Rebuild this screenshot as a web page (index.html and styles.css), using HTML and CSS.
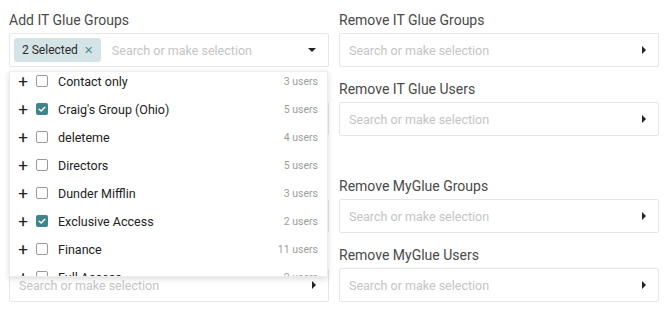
FILE: index.html
```html
<!DOCTYPE html>
<html lang="en">
<head>
    <meta charset="UTF-8">
    <meta name="viewport" content="width=device-width, initial-scale=1.0">
    <title>Group Sync</title>
    <link rel="stylesheet" href="styles.css">
</head>
<body>
    <div class="columns">
        <!-- Add column -->
        <div class="column">
            <div class="field">
                <label class="field-label">Add IT Glue Groups</label>
                <div class="select open">
                    <span class="tag">2 Selected <span class="tag-x">&#x2715;</span></span>
                    <span class="placeholder">Search or make selection</span>
                    <span class="caret-down"></span>
                </div>

                <div class="dropdown">
                    <ul class="options">
                        <li class="option"><span class="plus">+</span><span class="check"></span><span class="name">Contact only</span><span class="count">3 users</span></li>
                        <li class="option"><span class="plus">+</span><span class="check checked"><svg viewBox="0 0 12 12" width="12" height="12"><path d="M3.2 6.2 5.2 8 8.8 4.2" fill="none" stroke="#fff" stroke-width="1.4" stroke-linecap="round" stroke-linejoin="round"/></svg></span><span class="name">Craig's Group (Ohio)</span><span class="count">5 users</span></li>
                        <li class="option"><span class="plus">+</span><span class="check"></span><span class="name">deleteme</span><span class="count">4 users</span></li>
                        <li class="option"><span class="plus">+</span><span class="check"></span><span class="name">Directors</span><span class="count">5 users</span></li>
                        <li class="option"><span class="plus">+</span><span class="check"></span><span class="name">Dunder Mifflin</span><span class="count">3 users</span></li>
                        <li class="option"><span class="plus">+</span><span class="check checked"><svg viewBox="0 0 12 12" width="12" height="12"><path d="M3.2 6.2 5.2 8 8.8 4.2" fill="none" stroke="#fff" stroke-width="1.4" stroke-linecap="round" stroke-linejoin="round"/></svg></span><span class="name">Exclusive Access</span><span class="count">2 users</span></li>
                        <li class="option"><span class="plus">+</span><span class="check"></span><span class="name">Finance</span><span class="count">11 users</span></li>
                        <li class="option"><span class="plus">+</span><span class="check"></span><span class="name">Full Access</span><span class="count">2 users</span></li>
                    </ul>
                </div>
            </div>

            <div class="field">
                <label class="field-label">Add IT Glue Users</label>
                <div class="select">
                    <span class="placeholder">Search or make selection</span>
                    <span class="caret-right"></span>
                </div>
            </div>

            <div class="field section-start">
                <label class="field-label">Add MyGlue Groups</label>
                <div class="select">
                    <span class="placeholder">Search or make selection</span>
                    <span class="caret-right"></span>
                </div>
            </div>

            <div class="field">
                <label class="field-label">Add MyGlue Users</label>
                <div class="select">
                    <span class="placeholder">Search or make selection</span>
                    <span class="caret-right"></span>
                </div>
            </div>
        </div>

        <!-- Remove column -->
        <div class="column">
            <div class="field">
                <label class="field-label">Remove IT Glue Groups</label>
                <div class="select">
                    <span class="placeholder">Search or make selection</span>
                    <span class="caret-right"></span>
                </div>
            </div>

            <div class="field">
                <label class="field-label">Remove IT Glue Users</label>
                <div class="select">
                    <span class="placeholder">Search or make selection</span>
                    <span class="caret-right"></span>
                </div>
            </div>

            <div class="field section-start">
                <label class="field-label">Remove MyGlue Groups</label>
                <div class="select">
                    <span class="placeholder">Search or make selection</span>
                    <span class="caret-right"></span>
                </div>
            </div>

            <div class="field">
                <label class="field-label">Remove MyGlue Users</label>
                <div class="select">
                    <span class="placeholder">Search or make selection</span>
                    <span class="caret-right"></span>
                </div>
            </div>
        </div>
    </div>
</body>
</html>
```

FILE: styles.css
```css
* {
    box-sizing: border-box;
    margin: 0;
    padding: 0;
}

body {
    font-family: Roboto, "Liberation Sans", Arial, sans-serif;
    background-color: #fff;
    color: #333;
    padding: 12px 9px 0;
}

.columns {
    display: flex;
    gap: 10px;
}

.column {
    width: 320px;
}

.field {
    position: relative;
    margin-bottom: 14px;
}

.field.section-start {
    margin-top: 42px;
}

.field-label {
    display: block;
    font-size: 14px;
    line-height: 16px;
    color: #4a4a4a;
    margin-bottom: 5px;
}

.select {
    display: flex;
    align-items: center;
    height: 34px;
    padding: 0 10px 0 9px;
    border: 1px solid #e6e6e6;
    border-radius: 2px;
    background-color: #fff;
}

.select.open {
    padding-left: 4px;
}

.tag {
    display: inline-flex;
    align-items: center;
    height: 24px;
    padding: 0 8px;
    margin-right: 11px;
    border-radius: 3px;
    background-color: #d4e3e5;
    color: #2b2b2b;
    font-size: 12px;
    white-space: nowrap;
}

.tag-x {
    margin-left: 6px;
    font-size: 11px;
    color: #4b8990;
}

.placeholder {
    flex: 1;
    font-size: 12.5px;
    color: #c4c4c4;
    white-space: nowrap;
}

.caret-down {
    width: 0;
    height: 0;
    margin-right: 2px;
    border-left: 4px solid transparent;
    border-right: 4px solid transparent;
    border-top: 4px solid #222;
}

.caret-right {
    width: 0;
    height: 0;
    margin-right: 2px;
    border-top: 4px solid transparent;
    border-bottom: 4px solid transparent;
    border-left: 4px solid #222;
}

.dropdown {
    position: absolute;
    top: 59px;
    left: 0;
    width: 319px;
    height: 206px;
    overflow: hidden;
    background-color: #fff;
    border: 1px solid #ececec;
    box-shadow: 0 2px 6px rgba(0, 0, 0, 0.14);
    z-index: 10;
}

.options {
    list-style: none;
    margin-top: -5px;
}

.option {
    display: flex;
    align-items: center;
    height: 28px;
    padding: 0 9px 0 8px;
    font-size: 12.5px;
    color: #222;
}

.plus {
    width: 10px;
    font-size: 17px;
    line-height: 1;
    color: #222;
    margin-right: 8px;
    text-align: center;
}

.check {
    display: inline-flex;
    width: 12px;
    height: 12px;
    border: 1px solid #9a9a9a;
    border-radius: 2px;
    margin-right: 10px;
}

.check.checked {
    border: none;
    background-color: #3f838b;
}

.name {
    flex: 1;
    white-space: nowrap;
}

.count {
    font-size: 10.5px;
    color: #9d9d9d;
}
```
